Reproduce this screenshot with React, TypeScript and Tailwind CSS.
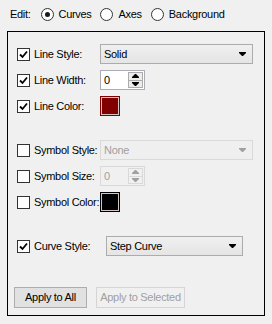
import React from 'react';

const font = { fontFamily: '"Liberation Sans", Arial, sans-serif' };

const Check = ({ checked }: { checked: boolean }) => (
    <div className="w-[13px] h-[13px] border border-[#333333] bg-white flex items-center justify-center shrink-0">
        {checked && (
            <svg width="9" height="9" viewBox="0 0 9 9">
                <path d="M1 4.5 L3.5 7 L8 1.5" stroke="#000" strokeWidth="1.8" fill="none" />
            </svg>
        )}
    </div>
);

const Radio = ({ checked }: { checked: boolean }) => (
    <div className="w-[13px] h-[13px] rounded-full border border-[#333333] bg-white flex items-center justify-center shrink-0">
        {checked && <div className="w-[5px] h-[5px] rounded-full bg-[#1a1a1a]"></div>}
    </div>
);

const Arrow = ({ color, up }: { color: string; up?: boolean }) => (
    <svg width="7" height="4" viewBox="0 0 7 4" className={up ? 'rotate-180' : ''}>
        <path d="M0 0 H7 V1 L4 4 H3 L0 1 Z" fill={color} />
    </svg>
);

const Dropdown = ({ value, width, disabled }: { value: string; width: string; disabled?: boolean }) => (
    <div
        className={`${width} h-[20px] shrink-0 border flex items-center justify-between pl-[3px] pr-[6px] ${
            disabled
                ? 'border-[#d9d9d9] bg-[#efefef] text-[#a0a0a0]'
                : 'border-[#acacac] bg-gradient-to-b from-[#f0f0f0] to-[#e5e5e5] text-black'
        }`}
    >
        <span>{value}</span>
        <Arrow color={disabled ? '#a0a0a0' : '#000'} />
    </div>
);

const Spin = ({ value, disabled }: { value: string; disabled?: boolean }) => (
    <div
        className={`w-[45px] h-[20px] shrink-0 border flex items-center pl-[3px] pr-[1px] ${
            disabled ? 'border-[#d9d9d9] bg-[#f0f0f0] text-[#a0a0a0]' : 'border-[#abadb3] bg-white text-black'
        }`}
    >
        <span className="flex-1">{value}</span>
        <div className="w-[15px] h-[16px] flex flex-col">
            <div
                className={`flex-1 flex items-center justify-center border ${
                    disabled ? 'border-[#d9d9d9]' : 'border-[#acacac] bg-[#ececec]'
                }`}
            >
                <Arrow color={disabled ? '#a0a0a0' : '#000'} up />
            </div>
            <div
                className={`flex-1 flex items-center justify-center border border-t-0 ${
                    disabled ? 'border-[#d9d9d9]' : 'border-[#acacac] bg-[#ececec]'
                }`}
            >
                <Arrow color={disabled ? '#a0a0a0' : '#000'} />
            </div>
        </div>
    </div>
);

const Swatch = ({ color }: { color: string }) => (
    <div className="w-[20px] h-[20px] shrink-0 border" style={{ borderColor: color, backgroundColor: color }}>
        <div className="w-full h-full border border-[#d4c4c4]"></div>
    </div>
);

const Row = ({ checked, label, children }: { checked: boolean; label: string; children: React.ReactNode }) => (
    <div className="flex items-center h-[20px]">
        <Check checked={checked} />
        <span className="ml-[4px] w-[66px] shrink-0 whitespace-nowrap">{label}</span>
        {children}
    </div>
);

const App = () => {
    return (
        <div
            className="w-[272px] h-[324px] bg-[#f0f0f0] text-[11px] tracking-[-0.3px] text-black px-[7px]"
            style={font}
        >
            {/* Edit mode */}
            <div className="flex items-center h-[31px] pl-[3px] pb-[3px]">
                <span>Edit:</span>
                <div className="flex items-center ml-[10px]">
                    <Radio checked />
                    <span className="ml-[5px]">Curves</span>
                </div>
                <div className="flex items-center ml-[8px]">
                    <Radio checked={false} />
                    <span className="ml-[6px]">Axes</span>
                </div>
                <div className="flex items-center ml-[9px]">
                    <Radio checked={false} />
                    <span className="ml-[5px]">Background</span>
                </div>
            </div>

            {/* Properties panel */}
            <div className="h-[285px] border border-black pt-[12px] pl-[9px] pr-[12px] flex flex-col">
                <div className="flex flex-col gap-[6px]">
                    <Row checked label="Line Style:">
                        <Dropdown value="Solid" width="w-[153px]" />
                    </Row>
                    <Row checked label="Line Width:">
                        <Spin value="0" />
                    </Row>
                    <Row checked label="Line Color:">
                        <Swatch color="#800000" />
                    </Row>
                </div>

                <div className="flex flex-col gap-[6px] mt-[24px]">
                    <Row checked={false} label="Symbol Style:">
                        <Dropdown value="None" width="w-[153px]" disabled />
                    </Row>
                    <Row checked={false} label="Symbol Size:">
                        <Spin value="0" disabled />
                    </Row>
                    <Row checked={false} label="Symbol Color:">
                        <Swatch color="#000000" />
                    </Row>
                </div>

                <div className="mt-[24px] flex items-center h-[20px]">
                    <Check checked />
                    <span className="ml-[4px] w-[72px] shrink-0 whitespace-nowrap">Curve Style:</span>
                    <Dropdown value="Step Curve" width="w-[137px]" />
                </div>

                <div className="mt-[31px] flex gap-[9px] -ml-[3px]">
                    <button className="w-[73px] h-[21px] border border-[#adadad] bg-[#e1e1e1] text-black whitespace-nowrap">
                        Apply to All
                    </button>
                    <button
                        className="w-[89px] h-[21px] border border-[#d5d5d5] bg-[#f0f0f0] text-[#a0a0a0] whitespace-nowrap"
                        disabled
                    >
                        Apply to Selected
                    </button>
                </div>
            </div>
        </div>
    );
};

export default App;
